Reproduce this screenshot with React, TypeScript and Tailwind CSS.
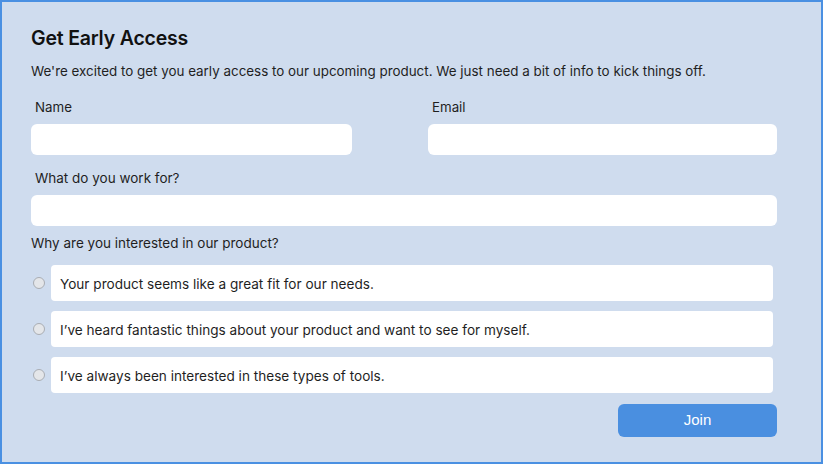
import React from 'react'

const options = [
  'Your product seems like a great fit for our needs.',
  'I’ve heard fantastic things about your product and want to see for myself.',
  'I’ve always been interested in these types of tools.',
]

export default function App() {
  const [choice, setChoice] = React.useState<number | null>(null)

  return (
    <div className="h-[464px] w-[823px] overflow-hidden border-2 border-[#4a90e2] bg-[#cfdcee] pl-[29px] pt-[22px] font-['Inter',sans-serif] text-[#1f1f1f]">
      <h1 className="h-[28px] text-[19.5px] font-semibold leading-[28px] tracking-[-0.01em] text-[#111]">
        Get Early Access
      </h1>
      <p className="mt-[9px] h-[20px] text-[13.4px] leading-[20px]">
        We're excited to get you early access to our upcoming product. We just need a bit of info to kick things off.
      </p>

      <div className="mt-[16px] flex w-[746px] justify-between">
        <div className="w-[321px]">
          <label className="block h-[20px] pl-[4px] text-[13.3px] leading-[20px]">Name</label>
          <input className="mt-[7px] block h-[31px] w-full rounded-[6px] bg-white px-3 text-[13px] outline-none" />
        </div>
        <div className="w-[349px]">
          <label className="block h-[20px] pl-[4px] text-[13.3px] leading-[20px]">Email</label>
          <input className="mt-[7px] block h-[31px] w-full rounded-[6px] bg-white px-3 text-[13px] outline-none" />
        </div>
      </div>

      <label className="mt-[13px] block h-[20px] pl-[4px] text-[13.5px] leading-[20px]">What do you work for?</label>
      <input className="mt-[7px] block h-[31px] w-[746px] rounded-[6px] bg-white px-3 text-[13px] outline-none" />

      <div className="mt-[7px] h-[20px] text-[13.5px] leading-[20px]">Why are you interested in our product?</div>

      <div className="mt-[12px] flex flex-col gap-[10px]">
        {options.map((text, i) => (
          <label key={i} className="flex items-center">
            <span
              onClick={() => setChoice(i)}
              className={[
                'ml-[2px] h-[12px] w-[12px] shrink-0 rounded-full border border-[#a9adb3] bg-[#e4e6e9]',
                choice === i ? 'bg-[#4a90e2]' : '',
              ].join(' ')}
            />
            <span className="ml-[6px] flex h-[36px] w-[722px] items-center rounded-[4px] bg-white pl-[9px] pt-[2px] text-[13.6px]">
              {text}
            </span>
          </label>
        ))}
      </div>

      <div className="mt-[11px] flex w-[746px] justify-end">
        <button className="h-[33px] w-[159px] rounded-[6px] bg-[#4a8fe0] font-['Liberation_Sans',Arial,sans-serif] text-[15px] font-medium text-white">
          Join
        </button>
      </div>
    </div>
  )
}
